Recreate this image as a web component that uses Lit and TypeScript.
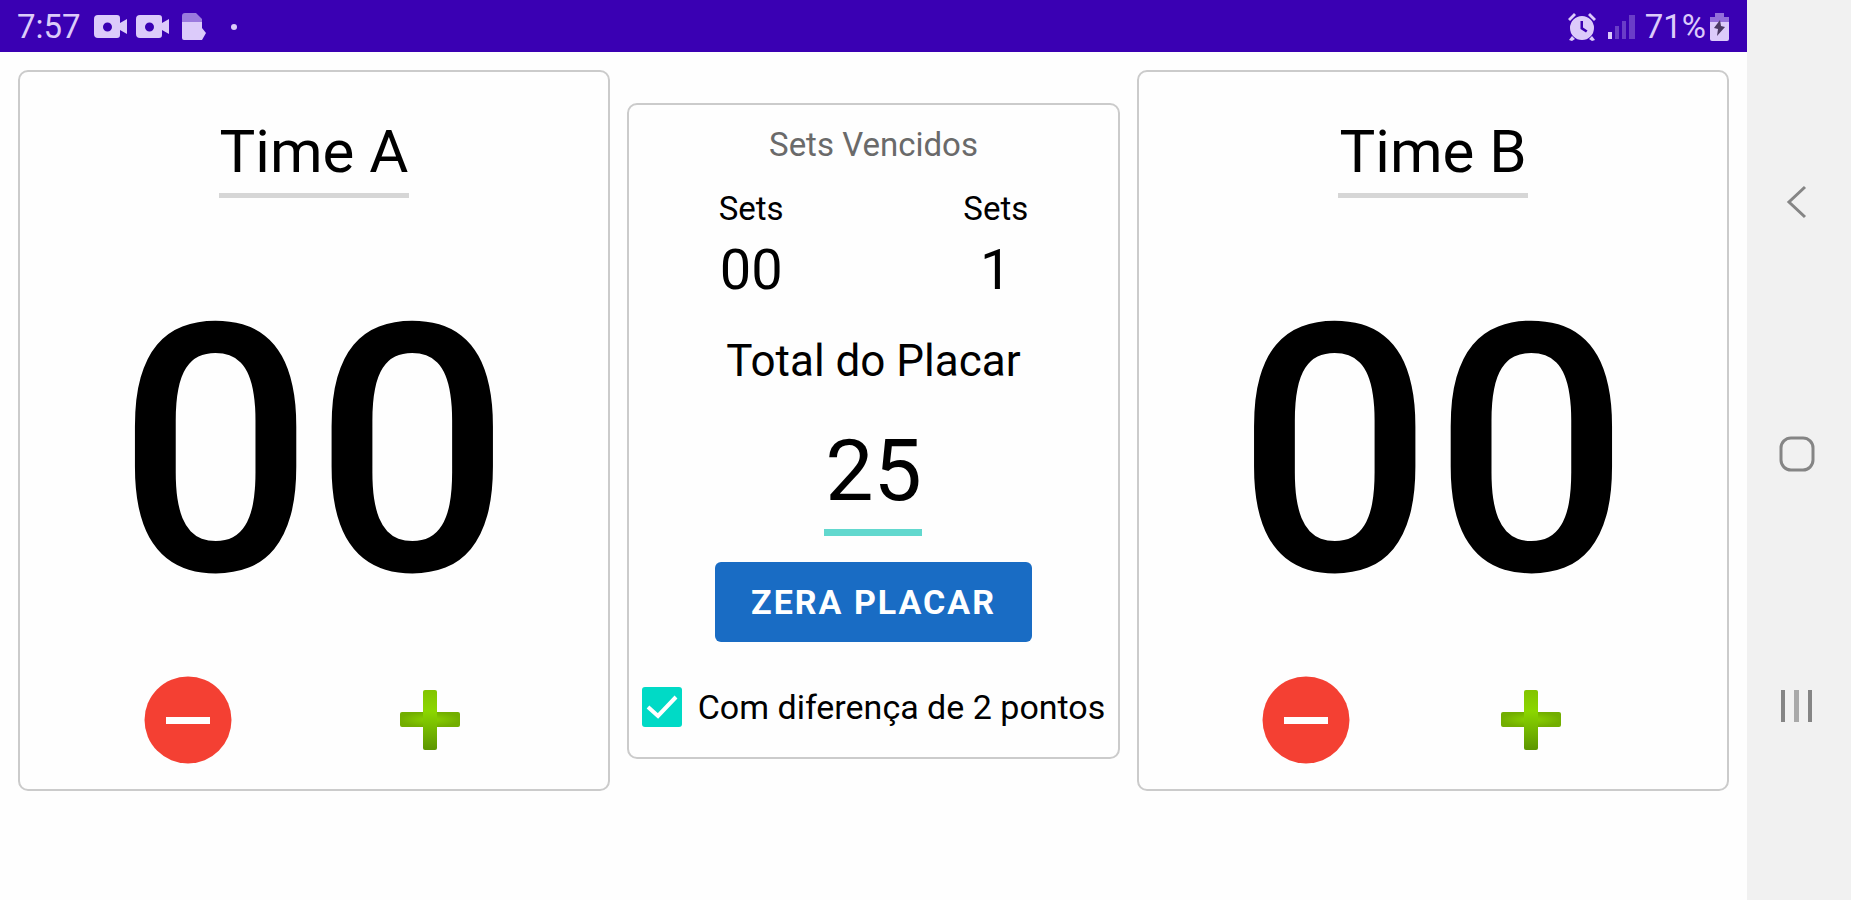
import { LitElement, html, css } from "lit";
import { customElement, property, state } from "lit/decorators.js";

@customElement("status-bar")
class StatusBar extends LitElement {
  static styles = css`
    :host {
      display: flex;
      justify-content: space-between;
      align-items: center;
      height: 52px;
      padding: 2px 18px 0 17px;
      box-sizing: border-box;
      background: #3a00b3;
      color: #dccbfa;
      font-size: 33px;
      line-height: 40px;
    }
    .group {
      display: flex;
      align-items: center;
    }
    .left {
      gap: 9px;
    }
    .left span {
      margin-right: 4px;
    }
    .right {
      gap: 7px;
    }
    svg {
      display: block;
      fill: currentColor;
    }
    .file {
      margin-left: 4px;
    }
    .dot {
      margin-left: 15px;
    }
    .level {
      display: flex;
      align-items: center;
      gap: 4px;
    }
  `;

  private camera() {
    return html`<svg width="33" height="26" viewBox="0 0 33 26" aria-hidden="true">
      <path fill-rule="evenodd" d="M4 1H23Q26 1 26 4V9L33 5V20L26 16V21Q26 24 23 24H4Q0 24 0 20V5Q0 1 4 1ZM13.500 8.500A4.500 4.500 0 1 0 13.500 17.500A4.500 4.500 0 1 0 13.500 8.500Z" />
    </svg>`;
  }

  render() {
    return html`
      <div class="group left">
        <span>7:57</span>
        ${this.camera()}${this.camera()}
        <svg class="file" width="24" height="28" viewBox="0 0 24 28" aria-hidden="true">
          <path opacity=".6" d="M0 8V3Q0 0 3 0H14L20 6V9H0Z" />
          <path d="M0 9H20V15L24 20L20 27H2Q0 27 0 25Z" />
        </svg>
        <svg class="dot" width="8" height="8" viewBox="0 0 8 8" aria-hidden="true"><circle cx="4" cy="4" r="3" /></svg>
      </div>
      <div class="group right">
        <svg width="30" height="30" viewBox="0 0 30 30" aria-hidden="true">
          <path d="M1 7L7 1L9 3L3 9ZM29 7L23 1L21 3L27 9ZM5 24L8 27L5 29L2 28ZM25 24L22 27L25 29L28 28Z" />
          <path fill-rule="evenodd" d="M15 4A12 12 0 1 0 15 28A12 12 0 1 0 15 4ZM13.500 9H16V15.500L20.500 18.500L19 20.500L13.500 17Z" />
        </svg>
        <svg width="34" height="28" viewBox="0 0 34 28" aria-hidden="true">
          <path d="M4 19H8V26H4Z" />
          <path opacity=".3" d="M11 13H15V26H11ZM18 8H22V26H18ZM25 2H31V26H25Z" />
        </svg>
        <div class="level">
          <span>71%</span>
          <svg width="19" height="28" viewBox="0 0 19 28" aria-hidden="true">
            <path opacity=".55" d="M5 0H14V4H19V10H0V4H5Z" />
            <path d="M0 9H19V26Q19 28 17 28H2Q0 28 0 26Z" />
            <path fill="#4b3a63" d="M10 7L4 15L8 16L7 23L15 14L11 13Z" />
          </svg>
        </div>
      </div>
    `;
  }
}

@customElement("team-card")
class TeamCard extends LitElement {
  @property() name = "";
  @property({ type: Number }) score = 0;

  static styles = css`
    :host {
      display: flex;
      flex-direction: column;
      align-items: center;
      box-sizing: border-box;
      padding: 44px 0 25px;
      border: 2px solid #cbcbcb;
      border-radius: 10px;
      background: #fefefe;
    }
    .name {
      width: 190px;
      padding: 0 0 5px;
      border: 0;
      border-bottom: 5px solid #d6d6d6;
      background: none;
      color: #000;
      font: 400 60px/72px Roboto, sans-serif;
      text-align: center;
      outline: none;
    }
    .score {
      margin: 81px 0 51px;
      font-size: 346px;
      line-height: 346px;
      font-weight: 500;
    }
    .actions {
      display: grid;
      grid-template-columns: 1fr 1fr;
      justify-items: center;
      align-self: stretch;
      padding: 0 57px 0 47px;
    }
    :host([compact]) .actions {
      padding: 0 84px 0 54px;
    }
    button {
      display: block;
      padding: 0;
      border: 0;
      background: none;
      cursor: pointer;
    }
    svg {
      display: block;
    }
  `;

  render() {
    return html`
      <input class="name" aria-label="Nome do time" .value=${this.name} />
      <div class="score">${String(this.score).padStart(2, "0")}</div>
      <div class="actions">
        <button aria-label="Diminuir" @click=${() => (this.score = Math.max(0, this.score - 1))}>
          <svg width="88" height="88" viewBox="0 0 88 88">
            <circle cx="44" cy="44" r="43.500" fill="#f44033" />
            <path d="M22 41H66V48H22Z" fill="#fff" />
          </svg>
        </button>
        <button aria-label="Aumentar" @click=${() => (this.score += 1)}>
          <svg width="88" height="88" viewBox="0 0 88 88">
            <defs>
              <linearGradient id="bar" x1="0" y1="0" x2="0" y2="1">
                <stop offset="0" stop-color="#82c400" />
                <stop offset=".35" stop-color="#8bd600" />
                <stop offset="1" stop-color="#5c9600" />
              </linearGradient>
              <radialGradient id="arm">
                <stop offset="0" stop-color="#8bd400" />
                <stop offset="1" stop-color="#72ae00" />
              </radialGradient>
            </defs>
            <rect x="14" y="36" width="60" height="15" rx="2" fill="url(#arm)" />
            <rect x="37" y="14" width="14" height="60" rx="2" fill="url(#bar)" />
          </svg>
        </button>
      </div>
    `;
  }
}

@customElement("match-card")
class MatchCard extends LitElement {
  @state() private byTwo = true;

  static styles = css`
    :host {
      display: flex;
      flex-direction: column;
      align-items: center;
      box-sizing: border-box;
      padding: 20px 0 30px;
      border: 2px solid #cbcbcb;
      border-radius: 10px;
      background: #fefefe;
      font-size: 33px;
      line-height: 40px;
      white-space: nowrap;
    }
    .title {
      color: #6a6a6a;
    }
    .sets {
      display: grid;
      grid-template-columns: 1fr 1fr;
      align-self: stretch;
      margin: 24px 0 33px;
      text-align: center;
    }
    .won {
      margin-top: 9px;
      font-size: 56px;
      line-height: 64px;
    }
    .total {
      font-size: 44px;
      line-height: 52px;
    }
    .limit {
      width: 98px;
      margin: 34px 0 26px;
      padding: 0 0 8px;
      border: 0;
      border-bottom: 7px solid #62d8ce;
      background: none;
      color: #000;
      font: 400 86px/100px Roboto, sans-serif;
      text-align: center;
      outline: none;
    }
    .reset {
      height: 80px;
      padding: 0 36px;
      border: 0;
      border-radius: 6px;
      background: #196cc4;
      color: #fff;
      font: 700 34px/40px Roboto, sans-serif;
      letter-spacing: 2px;
      text-transform: uppercase;
      cursor: pointer;
    }
    .option {
      display: flex;
      align-items: center;
      gap: 16px;
      margin-top: 45px;
      font-size: 34px;
    }
    .check {
      appearance: none;
      flex: none;
      width: 40px;
      height: 40px;
      margin: 0;
      border: 4px solid #777;
      border-radius: 3px;
    }
    .check:checked {
      border: 0;
      background: #00dac6
        url("data:image/svg+xml,%3Csvg xmlns='http://www.w3.org/2000/svg' viewBox='0 0 40 40'%3E%3Cpath d='M6 20L16 29L34 10' fill='none' stroke='white' stroke-width='4'/%3E%3C/svg%3E");
    }
  `;

  private reset() {
    this.dispatchEvent(new CustomEvent("reset-score"));
  }

  render() {
    return html`
      <div class="title">Sets Vencidos</div>
      <div class="sets">
        <div>
          <div>Sets</div>
          <div class="won">00</div>
        </div>
        <div>
          <div>Sets</div>
          <div class="won">1</div>
        </div>
      </div>
      <label class="total" for="limit">Total do Placar</label>
      <input class="limit" id="limit" inputmode="numeric" value="25" />
      <button class="reset" @click=${this.reset}>Zera Placar</button>
      <label class="option">
        <input
          class="check"
          type="checkbox"
          .checked=${this.byTwo}
          @change=${(e: Event) => (this.byTwo = (e.target as HTMLInputElement).checked)}
        />
        Com diferença de 2 pontos
      </label>
    `;
  }
}

@customElement("nav-bar")
class NavBar extends LitElement {
  static styles = css`
    :host {
      display: grid;
      grid-template-rows: repeat(3, 1fr);
      place-items: center;
      box-sizing: border-box;
      padding: 76px 4px 68px 0;
      background: #f1f1f1;
    }
    button {
      padding: 0;
      border: 0;
      background: none;
      cursor: pointer;
    }
    svg {
      display: block;
      fill: none;
      stroke: #858585;
      stroke-width: 3;
    }
  `;

  render() {
    return html`
      <button aria-label="Voltar">
        <svg width="40" height="40" viewBox="0 0 40 40"><path d="M28 5L12 20L28 35" /></svg>
      </button>
      <button aria-label="Início">
        <svg width="40" height="40" viewBox="0 0 40 40"><rect x="4" y="4" width="32" height="32" rx="10" /></svg>
      </button>
      <button aria-label="Recentes">
        <svg width="40" height="40" viewBox="0 0 40 40">
          <path d="M6 4V36M33 4V36" stroke-width="4" />
          <path d="M19.500 4V36" stroke="#a9a9a9" stroke-width="5" />
        </svg>
      </button>
    `;
  }
}

@customElement("app-root")
class AppRoot extends LitElement {
  static styles = css`
    :host {
      display: grid;
      grid-template-columns: 1fr 104px;
      min-height: 100vh;
      background: #fefefe;
      color: #000;
      font-family: Roboto, sans-serif;
    }
    .board {
      display: grid;
      grid-template-columns: 6fr 5fr 6fr;
      gap: 17px;
      align-items: center;
      padding: 18px;
    }
  `;

  private resetScores() {
    this.renderRoot.querySelectorAll("team-card").forEach((card) => ((card as TeamCard).score = 0));
  }

  render() {
    return html`
      <div>
        <status-bar></status-bar>
        <main class="board">
          <team-card name="Time A"></team-card>
          <match-card @reset-score=${this.resetScores}></match-card>
          <team-card name="Time B" compact></team-card>
        </main>
      </div>
      <nav-bar></nav-bar>
    `;
  }
}
